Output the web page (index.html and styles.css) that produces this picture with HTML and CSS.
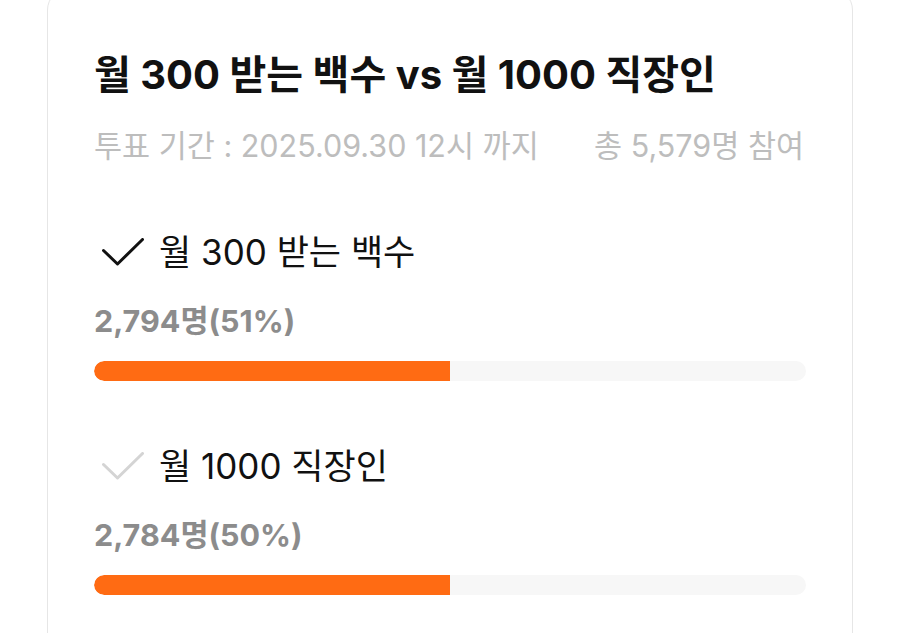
FILE: index.html
```html
<!DOCTYPE html>
<html lang="ko">
<head>
<meta charset="utf-8">
<link rel="stylesheet" href="styles.css">
</head>
<body>
<div class="card">
  <h1 class="title">월 300 받는 백수 vs 월 1000 직장인</h1>
  <div class="meta">
    <span>투표 기간 : 2025.09.30 12시 까지</span>
    <span>총 5,579명 참여</span>
  </div>
  <div class="option">
    <div class="opt-head">
      <svg class="check" viewBox="0 0 42 28" width="42" height="28"><polyline points="1.5,12.5 15.5,26 40.5,1.5" fill="none" stroke="#111" stroke-width="3" stroke-linecap="round" stroke-linejoin="round"/></svg>
      <span class="opt-label">월 300 받는 백수</span>
    </div>
    <div class="count">2,794명(51%)</div>
    <div class="track"><div class="fill" style="width:50%"></div></div>
  </div>
  <div class="option">
    <div class="opt-head">
      <svg class="check" viewBox="0 0 42 28" width="42" height="28"><polyline points="1.5,12.5 15.5,26 40.5,1.5" fill="none" stroke="#d4d4d4" stroke-width="3" stroke-linecap="round" stroke-linejoin="round"/></svg>
      <span class="opt-label">월 1000 직장인</span>
    </div>
    <div class="count">2,784명(50%)</div>
    <div class="track"><div class="fill" style="width:50%"></div></div>
  </div>
</div>
</body>
</html>
```
FILE: styles.css
```css
html, body {
  margin: 0;
  padding: 0;
  background: #ffffff;
  overflow: hidden;
}
body {
  font-family: "Inter", "Noto Sans CJK KR", sans-serif;
  color: #111;
}
.card {
  margin: -12px 0 0 47px;
  width: 806px;
  box-sizing: border-box;
  border: 1.5px solid #e6e6e6;
  border-radius: 22px;
  padding: 60px 46px 60px 46px;
  height: 720px;
}
.title {
  margin: 0;
  font-size: 40px;
  font-weight: 700;
  line-height: 52px;
}
.meta {
  display: flex;
  justify-content: space-between;
  margin-top: 25px;
  font-size: 30.5px;
  line-height: 40px;
  color: #bdbdbd;
  padding-right: 2px;
}
.option {
  margin-top: 64px;
}
.option + .option {
  margin-top: 63px;
}
.opt-head {
  display: flex;
  align-items: center;
  gap: 15px;
  height: 44px;
}
.check {
  margin-left: 8px;
  display: block;
}
.opt-label {
  font-size: 35px;
  font-weight: 400;
  line-height: 44px;
}
.count {
  margin-top: 27px;
  font-size: 30.5px;
  font-weight: 700;
  line-height: 40px;
  color: #8c8c8c;
}
.track {
  margin-top: 20px;
  height: 20px;
  border-radius: 10px;
  background: #f7f7f7;
  overflow: hidden;
}
.fill {
  height: 100%;
  background: #ff6b13;
  border-radius: 10px 0 0 10px;
}
```
